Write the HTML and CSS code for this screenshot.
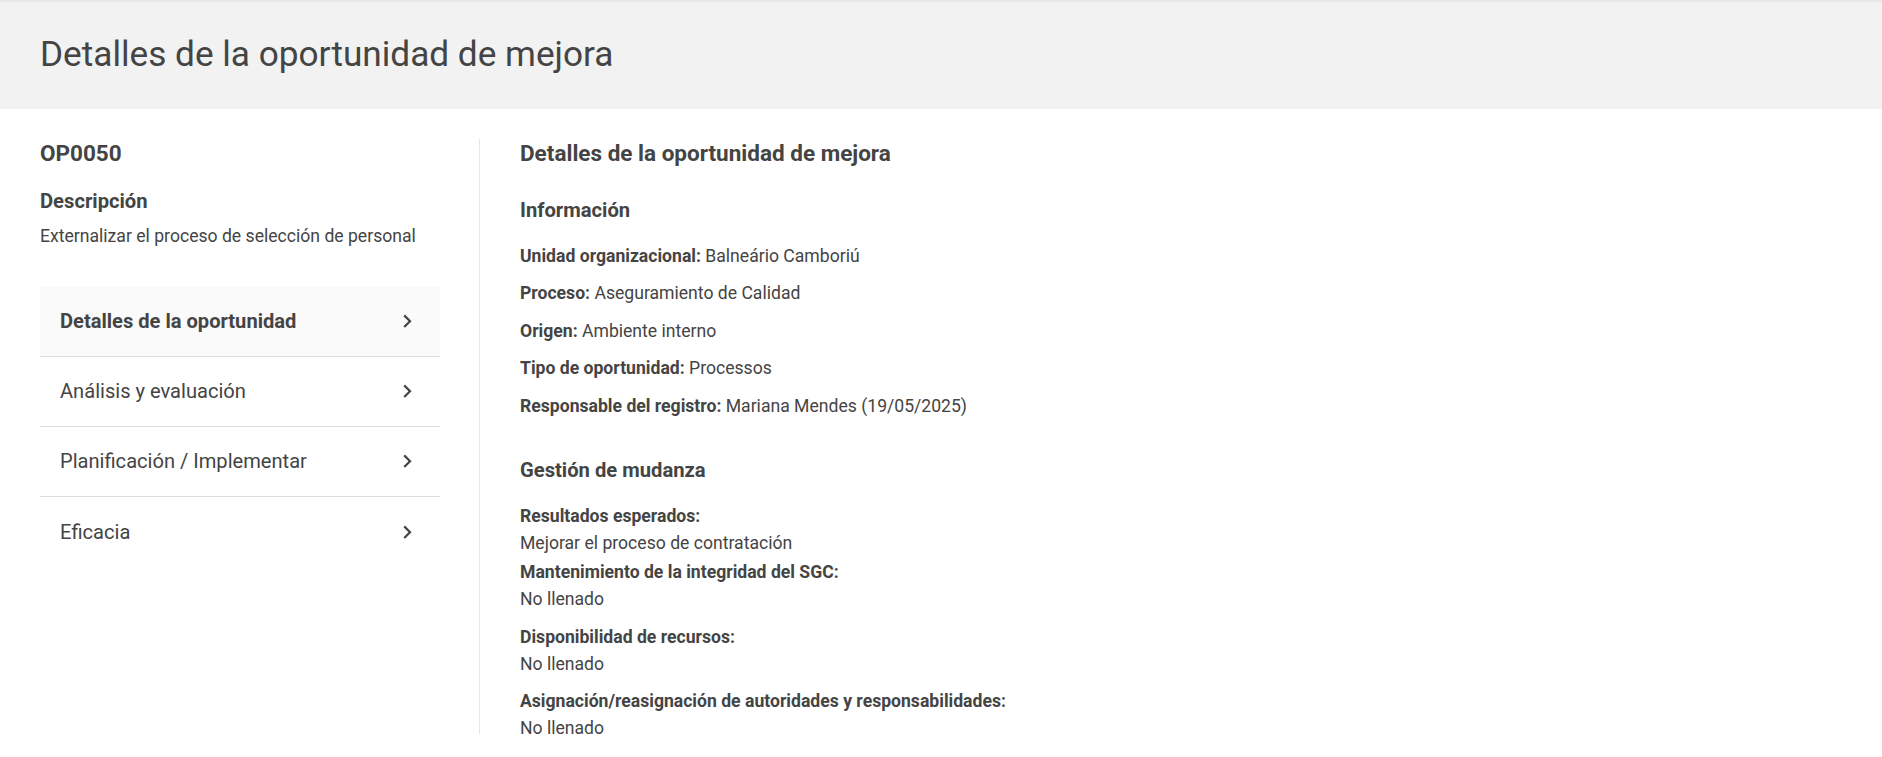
FILE: index.html
```html
<!DOCTYPE html>
<html lang="es">
<head>
<meta charset="utf-8">
<title>Detalles de la oportunidad de mejora</title>
<link rel="stylesheet" href="styles.css">
</head>
<body>
<header class="page-header">
  <h1 class="page-title">Detalles de la oportunidad de mejora</h1>
</header>
<main class="main">
  <aside class="sidebar">
    <div class="code">OP0050</div>
    <h3 class="side-heading">Descripción</h3>
    <p class="side-text">Externalizar el proceso de selección de personal</p>
    <nav class="side-nav">
      <a class="nav-item nav-item--active">
        <span>Detalles de la oportunidad</span>
        <svg class="chev" viewBox="0 0 24 24"><path d="M10 6L8.59 7.41 13.17 12l-4.58 4.59L10 18l6-6z"/></svg>
      </a>
      <a class="nav-item">
        <span>Análisis y evaluación</span>
        <svg class="chev" viewBox="0 0 24 24"><path d="M10 6L8.59 7.41 13.17 12l-4.58 4.59L10 18l6-6z"/></svg>
      </a>
      <a class="nav-item">
        <span>Planificación / Implementar</span>
        <svg class="chev" viewBox="0 0 24 24"><path d="M10 6L8.59 7.41 13.17 12l-4.58 4.59L10 18l6-6z"/></svg>
      </a>
      <a class="nav-item">
        <span>Eficacia</span>
        <svg class="chev" viewBox="0 0 24 24"><path d="M10 6L8.59 7.41 13.17 12l-4.58 4.59L10 18l6-6z"/></svg>
      </a>
    </nav>
  </aside>
  <section class="content">
    <h2 class="content-title">Detalles de la oportunidad de mejora</h2>
    <div class="section">
      <h3 class="section-title">Información</h3>
      <div class="field"><b>Unidad organizacional:</b> Balneário Camboriú</div>
      <div class="field"><b>Proceso:</b> Aseguramiento de Calidad</div>
      <div class="field"><b>Origen:</b> Ambiente interno</div>
      <div class="field"><b>Tipo de oportunidad:</b> Processos</div>
      <div class="field"><b>Responsable del registro:</b> Mariana Mendes (19/05/2025)</div>
    </div>
    <div class="section">
      <h3 class="section-title">Gestión de mudanza</h3>
      <div class="field field--tight">
        <div class="label">Resultados esperados:</div>
        <div class="value">Mejorar el proceso de contratación</div>
      </div>
      <div class="field">
        <div class="label">Mantenimiento de la integridad del SGC:</div>
        <div class="value">No llenado</div>
      </div>
      <div class="field">
        <div class="label">Disponibilidad de recursos:</div>
        <div class="value">No llenado</div>
      </div>
      <div class="field">
        <div class="label">Asignación/reasignación de autoridades y responsabilidades:</div>
        <div class="value">No llenado</div>
      </div>
    </div>
  </section>
</main>
</body>
</html>
```

FILE: styles.css
```css
* { box-sizing: border-box; }

html, body {
  margin: 0;
  padding: 0;
  background: #ffffff;
}

body {
  font-family: Roboto, "Noto Sans", Arial, sans-serif;
  color: #444444;
  font-size: 17.6px;
  min-height: 100vh;
}

.page-header {
  height: 109px;
  background: #f2f2f2;
  border-top: 2px solid #e9e9e9;
  padding: 32px 40px 0;
}

.page-title {
  margin: 0;
  font-size: 35.2px;
  font-weight: 400;
  line-height: 41px;
  color: #444444;
}

.main {
  display: flex;
  align-items: flex-start;
  padding: 30px 40px 0;
}

.sidebar {
  width: 440px;
  height: calc(100vh - 162px);
  flex-shrink: 0;
  padding-right: 39px;
  border-right: 1px solid #e6e6e6;
  display: flex;
  flex-direction: column;
}

.code {
  font-size: 22.5px;
  font-weight: 700;
  line-height: 28px;
}

.side-heading {
  margin: 21.5px 0 0;
  font-size: 20.2px;
  font-weight: 700;
  line-height: 24px;
}

.side-text {
  margin: 10.3px 0 0;
  line-height: 27px;
}

.side-nav {
  margin-top: 37px;
  display: flex;
  flex-direction: column;
}

.nav-item {
  height: 70px;
  display: flex;
  align-items: center;
  justify-content: space-between;
  padding: 0 20px;
  font-size: 20.1px;
  color: #444444;
  border-bottom: 1px solid #dddddd;
  text-decoration: none;
}

.nav-item:last-child {
  border-bottom: none;
}

.nav-item--active {
  background: #fafafa;
  font-weight: 700;
}

.chev {
  width: 26.4px;
  height: 26.4px;
  fill: #444444;
  flex-shrink: 0;
}

.content {
  flex: 1;
  padding-left: 40px;
  display: flex;
  flex-direction: column;
}

.content-title {
  margin: 0 0 29.75px;
  font-size: 22.5px;
  font-weight: 700;
  line-height: 29px;
}

.section {
  display: flex;
  flex-direction: column;
}

.section + .section {
  margin-top: 27.75px;
}

.section-title {
  margin: 0 0 20.75px;
  font-size: 20.2px;
  font-weight: 700;
  line-height: 24px;
}

.field {
  line-height: 27px;
  margin-bottom: 10.6px;
}

.field--tight {
  margin-bottom: 2px;
}

.field b,
.label {
  font-weight: 700;
}
```
